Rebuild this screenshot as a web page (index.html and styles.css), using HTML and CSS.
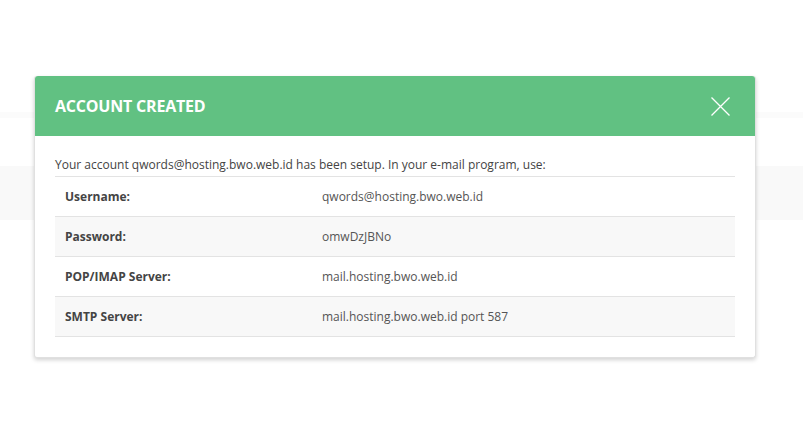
FILE: index.html
```html
<!DOCTYPE html>
<html>
<head>
<meta charset="utf-8">
<link rel="stylesheet" href="styles.css">
</head>
<body>
<div class="page">
  <div class="band band-thin"></div>
  <div class="band band-wide"></div>
</div>
<div class="overlay">
  <div class="modal">
    <div class="modal-header">
      <h4 class="modal-title">ACCOUNT CREATED</h4>
      <button class="close" aria-label="Close">
        <svg width="19" height="19" viewBox="0 0 19 19"><path d="M0.5 0.5L18.5 18.5M18.5 0.5L0.5 18.5" stroke="#fff" stroke-width="1.3" fill="none"/></svg>
      </button>
    </div>
    <div class="modal-body">
      <p class="intro">Your account qwords@hosting.bwo.web.id has been setup. In your e-mail program, use:</p>
      <table class="info">
        <tr><th>Username:</th><td>qwords@hosting.bwo.web.id</td></tr>
        <tr><th>Password:</th><td>omwDzJBNo</td></tr>
        <tr><th>POP/IMAP Server:</th><td>mail.hosting.bwo.web.id</td></tr>
        <tr><th>SMTP Server:</th><td>mail.hosting.bwo.web.id port 587</td></tr>
      </table>
    </div>
  </div>
</div>
</body>
</html>
```
FILE: styles.css
```css
html, body {
  margin: 0;
  padding: 0;
  background: #fff;
  font-family: "Open Sans", "Liberation Sans", sans-serif;
  color: #444;
  width: 803px;
  height: 432px;
  overflow: hidden;
}
.page {
  padding-top: 112px;
}
.band-thin {
  height: 6px;
  background: #fbfbfb;
}
.band-wide {
  margin-top: 48px;
  height: 54px;
  background: #f9f9f9;
}
.overlay {
  position: absolute;
  left: 0;
  top: 0;
  width: 803px;
  height: 432px;
}
.modal {
  position: absolute;
  left: 34px;
  top: 76px;
  width: 720px;
  background: #fff;
  border: 1px solid #e0e0e0;
  border-top: 0;
  border-radius: 3px;
  box-shadow: 0 2px 4px rgba(0,0,0,0.18);
}
.modal-header {
  background: #61c182;
  height: 60px;
  border-radius: 3px 3px 0 0;
  display: flex;
  align-items: center;
  justify-content: space-between;
  padding: 0 25px 0 20px;
}
.modal-title {
  margin: 0;
  color: #fff;
  font-size: 16px;
  font-weight: 700;
  letter-spacing: -0.2px;
}
.close {
  background: none;
  border: 0;
  padding: 0;
  width: 19px;
  height: 19px;
  display: block;
  cursor: pointer;
}
.close svg { display: block; }
.modal-body {
  padding: 19px 20px 20px 20px;
}
.intro {
  margin: 0 0 2px;
  font-size: 12px;
  line-height: 19px;
  color: #444;
}
.info {
  width: 100%;
  border-collapse: collapse;
  font-size: 12px;
}
.info tr:nth-child(even) { background: #f8f8f8; }
.info th, .info td {
  height: 39px;
  padding: 0 10px;
  border-top: 1px solid #e3e3e3;
  text-align: left;
  vertical-align: middle;
}
.info tr:last-child th, .info tr:last-child td {
  border-bottom: 1px solid #e3e3e3;
}
.info th {
  width: 237px;
  font-weight: 700;
  color: #444;
}
.info td {
  color: #555;
}
```
